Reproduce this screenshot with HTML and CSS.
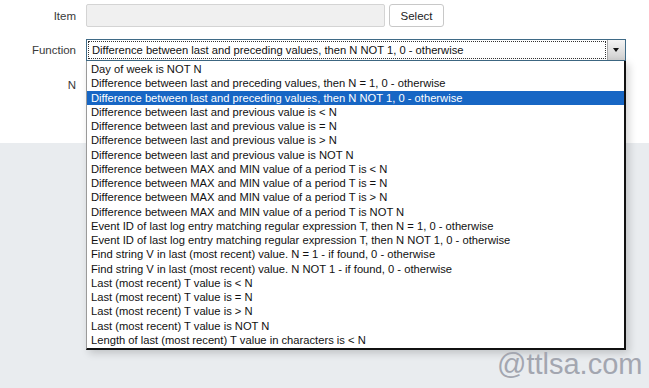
FILE: index.html
```html
<!DOCTYPE html>
<html>
<head>
    <meta name="viewport" content="width=device-width, initial-scale=1.0">
    <title>Trigger expression</title>
    <link rel="stylesheet" href="styles.css">
</head>
<body>
    <div class="panel">
        <form class="form">
            <div class="row">
                <label class="label">Item</label>
                <div class="field">
                    <input class="item-input" type="text" readonly>
                    <button type="button" class="btn">Select</button>
                </div>
            </div>
            <div class="row">
                <label class="label">Function</label>
                <div class="field select-wrap">
                    <div class="select">
                        <span class="select-value">Difference between last and preceding values, then N NOT 1, 0 - otherwise</span>
                        <span class="select-arrow"></span>
                    </div>
                    <!-- lista aberta do select -->
                    <ul class="options">
                        <li>Day of week is NOT N</li>
                        <li>Difference between last and preceding values, then N = 1, 0 - otherwise</li>
                        <li class="active">Difference between last and preceding values, then N NOT 1, 0 - otherwise</li>
                        <li>Difference between last and previous value is &lt; N</li>
                        <li>Difference between last and previous value is = N</li>
                        <li>Difference between last and previous value is &gt; N</li>
                        <li>Difference between last and previous value is NOT N</li>
                        <li>Difference between MAX and MIN value of a period T is &lt; N</li>
                        <li>Difference between MAX and MIN value of a period T is = N</li>
                        <li>Difference between MAX and MIN value of a period T is &gt; N</li>
                        <li>Difference between MAX and MIN value of a period T is NOT N</li>
                        <li>Event ID of last log entry matching regular expression T, then N = 1, 0 - otherwise</li>
                        <li>Event ID of last log entry matching regular expression T, then N NOT 1, 0 - otherwise</li>
                        <li>Find string V in last (most recent) value. N = 1 - if found, 0 - otherwise</li>
                        <li>Find string V in last (most recent) value. N NOT 1 - if found, 0 - otherwise</li>
                        <li>Last (most recent) T value is &lt; N</li>
                        <li>Last (most recent) T value is = N</li>
                        <li>Last (most recent) T value is &gt; N</li>
                        <li>Last (most recent) T value is NOT N</li>
                        <li>Length of last (most recent) T value in characters is &lt; N</li>
                    </ul>
                </div>
            </div>
            <div class="row">
                <label class="label">N</label>
                <div class="field">
                    <input class="n-input" type="text">
                </div>
            </div>
        </form>
    </div>
    <div class="watermark">@ttlsa.com</div>
</body>
</html>
```

FILE: styles.css
```css
body {
    margin: 0;
    padding: 0;
    background-color: #e9ecef;
    font-family: "Liberation Sans", Arial, sans-serif;
    font-size: 11.5px;
    color: #333;
    height: 388px;
    overflow: hidden;
    position: relative;
}
.panel {
    background-color: #fff;
    height: 143px;
}
.form {
    padding-top: 4px;
    display: flex;
    flex-direction: column;
    gap: 12px;
}
.row {
    display: grid;
    grid-template-columns: 76px 1fr;
    column-gap: 10px;
    align-items: center;
}
.label {
    text-align: right;
    color: #3a3a3a;
}
.field {
    display: flex;
    gap: 4px;
    align-items: center;
}
.item-input {
    width: 299px;
    height: 23px;
    box-sizing: border-box;
    background-color: #f0f0f0;
    border: 1px solid #d4d4d4;
    border-radius: 2px;
    margin: 0;
}
.btn {
    height: 23px;
    width: 55px;
    box-sizing: border-box;
    background-color: #fff;
    border: 1px solid #c8c8c8;
    border-radius: 3px;
    font-family: "Liberation Sans", Arial, sans-serif;
    font-size: 11.5px;
    color: #222;
    padding: 0;
    margin: 0;
}
.n-input {
    width: 120px;
    height: 23px;
    box-sizing: border-box;
    border: 1px solid #ccc;
    margin: 0;
}
.select-wrap {
    position: relative;
    width: 540px;
}
.select {
    width: 540px;
    height: 22px;
    box-sizing: border-box;
    border: 1px solid #3f6a86;
    display: flex;
    align-items: stretch;
    background-color: #fff;
}
.select-value {
    flex: 1;
    margin: 1px;
    border: 1px dotted #333;
    padding-left: 3px;
    line-height: 16px;
    font-size: 11.2px;
    color: #111;
    white-space: nowrap;
    overflow: hidden;
}
.select-arrow {
    width: 17px;
    background: linear-gradient(#f4f4f4, #cfcfcf);
    border-left: 1px solid #a8a8a8;
    position: relative;
}
.select-arrow::after {
    content: "";
    position: absolute;
    left: 5px;
    top: 8px;
    border-left: 3.5px solid transparent;
    border-right: 3.5px solid transparent;
    border-top: 4px solid #111;
}
.options {
    position: absolute;
    top: 22px;
    left: 0;
    width: 540px;
    box-sizing: border-box;
    margin: 0;
    padding: 1px 0 1px 0;
    list-style: none;
    background-color: #fff;
    border-left: 1px solid #9a9a9a;
    border-right: 2px solid #111;
    border-bottom: 2px solid #111;
    box-shadow: 3px 3px 8px rgba(0, 0, 0, 0.18);
}
.options li {
    height: 14.25px;
    line-height: 14.25px;
    padding-left: 4px;
    font-size: 11.2px;
    color: #111;
    white-space: nowrap;
}
.options li.active {
    background-color: #1766c4;
    color: #fff;
}
.watermark {
    position: absolute;
    left: 497px;
    top: 348px;
    font-size: 29px;
    color: #a3a6b0;
}
```
